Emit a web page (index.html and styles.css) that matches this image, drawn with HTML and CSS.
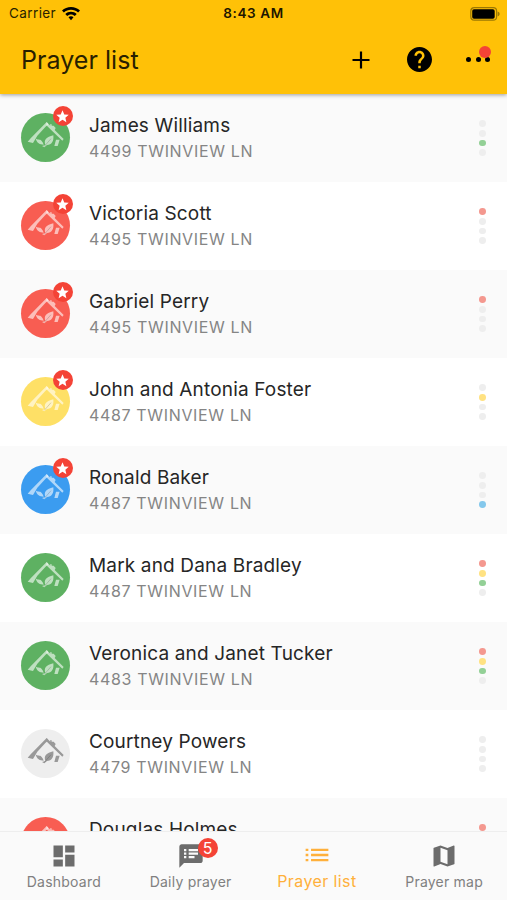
FILE: index.html
```html
<!DOCTYPE html>
<html lang="en">
<head>
<meta charset="utf-8">
<title>Prayer list</title>
<link rel="stylesheet" href="styles.css">
</head>
<body>
<svg class="defs" aria-hidden="true">
  <symbol id="house" viewBox="0 0 147 147">
    <path d="M77 27 L82 34 L73 42 L49 68 L36 90 L20 86 L29 76 Z"/>
    <path d="M77 27 L88 38 L87 34 L92 34 L92 38 L98 38 L104 45 L101 51 L128 78 L124 83 L96 56 L76 37 Z"/>
    <path d="M44 76 C49 83 57 77 62 84 C65 88 67 91 68 95 C57 95 47 91 44 76Z"/>
    <path d="M73 96 C68 79 76 73 97 67 C99 86 92 95 78 96 L70 103 L63 99 Z"/>
    <path d="M105 80 L116 80 L110 99 L100 99 Z"/>
    <path class="vein" d="M70 100 L90 77"/>
  </symbol>
  <symbol id="star" viewBox="0 0 24 24">
    <path d="M12 17.3 18.2 21l-1.64-7.03L22 9.24l-7.19-.61L12 2 9.19 8.63 2 9.24l5.46 4.73L5.82 21z"/>
  </symbol>
</svg>
<div class="screen">
  <header class="top">
    <div class="status">
      <div class="carrier"><span>Carrier</span>
        <svg class="wifi" viewBox="0 0 18 14"><path d="M9 0C5.500 0 2.400 1.300 0 3.600L1.900 5.600C3.800 3.800 6.300 2.800 9 2.800s5.200 1 7.100 2.800L18 3.600C15.600 1.300 12.500 0 9 0ZM9 4.700c-2.200 0-4.200.8-5.700 2.300L5.200 9C6.200 8 7.500 7.400 9 7.400S11.800 8 12.800 9l1.900-2C13.200 5.500 11.200 4.700 9 4.700ZM9 9.200c-1 0-1.800.4-2.500 1L9 13.200l2.500-3C10.800 9.600 10 9.200 9 9.200Z"/></svg>
      </div>
      <div class="time">8:43 AM</div>
      <svg class="battery" viewBox="0 0 30 14"><rect class="shell" x=".8" y=".7" width="25.800" height="12.500" rx="3.500"/><rect x="2.200" y="2.200" width="22.500" height="9.500" rx="1.800"/><path class="tip" d="M27.600 4.600c1.500.5 2 1.300 2 2.300s-.5 1.900-2 2.300Z"/></svg>
    </div>
    <div class="bar">
      <h1>Prayer list</h1>
      <svg class="plus" viewBox="0 0 18 18"><path d="M9 .5V17.500M.5 9H17.500"/></svg>
      <svg class="help" viewBox="2 2 20 20"><path d="M12 2C6.480 2 2 6.480 2 12s4.480 10 10 10 10-4.480 10-10S17.520 2 12 2zm1 17h-2v-2h2v2zm2.070-7.750l-.9.920C13.450 12.900 13 13.500 13 15h-2v-.5c0-1.100.45-2.100 1.170-2.830l1.240-1.260c.37-.36.590-.86.590-1.410 0-1.100-.9-2-2-2s-2 .9-2 2H8c0-2.210 1.790-4 4-4s4 1.790 4 4c0 .88-.36 1.680-.93 2.250z"/></svg>
      <div class="more"><i></i><i></i><i></i><b></b></div>
    </div>
  </header>
  <main class="list">
    <div class="row"><div class="avatar green"><svg><use href="#house"/></svg><span class="badge"><svg><use href="#star"/></svg></span></div><div class="text"><h2>James Williams</h2><p>4499 TWINVIEW LN</p></div><div class="dots"><i></i><i></i><i class="g"></i><i></i></div></div>
    <div class="row"><div class="avatar red"><svg><use href="#house"/></svg><span class="badge"><svg><use href="#star"/></svg></span></div><div class="text"><h2>Victoria Scott</h2><p>4495 TWINVIEW LN</p></div><div class="dots"><i class="r"></i><i></i><i></i><i></i></div></div>
    <div class="row"><div class="avatar red"><svg><use href="#house"/></svg><span class="badge"><svg><use href="#star"/></svg></span></div><div class="text"><h2>Gabriel Perry</h2><p>4495 TWINVIEW LN</p></div><div class="dots"><i class="r"></i><i></i><i></i><i></i></div></div>
    <div class="row"><div class="avatar yellow"><svg><use href="#house"/></svg><span class="badge"><svg><use href="#star"/></svg></span></div><div class="text"><h2>John and Antonia Foster</h2><p>4487 TWINVIEW LN</p></div><div class="dots"><i></i><i class="y"></i><i></i><i></i></div></div>
    <div class="row"><div class="avatar blue"><svg><use href="#house"/></svg><span class="badge"><svg><use href="#star"/></svg></span></div><div class="text"><h2>Ronald Baker</h2><p>4487 TWINVIEW LN</p></div><div class="dots"><i></i><i></i><i></i><i class="b"></i></div></div>
    <div class="row"><div class="avatar green"><svg><use href="#house"/></svg></div><div class="text"><h2>Mark and Dana Bradley</h2><p>4487 TWINVIEW LN</p></div><div class="dots"><i class="r"></i><i class="y"></i><i class="g"></i><i></i></div></div>
    <div class="row"><div class="avatar green"><svg><use href="#house"/></svg></div><div class="text"><h2>Veronica and Janet Tucker</h2><p>4483 TWINVIEW LN</p></div><div class="dots"><i class="r"></i><i class="y"></i><i class="g"></i><i></i></div></div>
    <div class="row"><div class="avatar gray"><svg><use href="#house"/></svg></div><div class="text"><h2>Courtney Powers</h2><p>4479 TWINVIEW LN</p></div><div class="dots"><i></i><i></i><i></i><i></i></div></div>
    <div class="row"><div class="avatar red"><svg><use href="#house"/></svg></div><div class="text"><h2>Douglas Holmes</h2></div><div class="dots"><i class="r"></i><i></i><i></i><i></i></div></div>
  </main>
  <nav class="tabs">
    <div class="tab"><svg viewBox="0 0 24 24"><path d="M3 13h8V3H3v10zm0 8h8v-6H3v6zm10 0h8V11h-8v10zm0-18v6h8V3h-8z"/></svg><span>Dashboard</span></div>
    <div class="tab"><div class="icon"><svg viewBox="0 0 24 24"><path d="M20 2H4c-1.100 0-1.990.9-1.990 2L2 22l4-4h14c1.100 0 2-.9 2-2V4c0-1.100-.9-2-2-2zM8 14H6v-2h2v2zm0-3H6V9h2v2zm0-3H6V6h2v2zm7 6h-5v-2h5v2zm3-3h-8V9h8v2zm0-3h-8V6h8v2z"/></svg><span class="count">5</span></div><span>Daily prayer</span></div>
    <div class="tab active"><svg viewBox="0 0 24 24"><path d="M1.500 6.200H4v2.200H1.500zM1.500 10.900H4v2.200H1.500zM1.500 15.600H4v2.200H1.500zM6.500 6.200h16v2.200h-16zM6.500 10.900h16v2.200h-16zM6.500 15.600h16v2.200h-16z"/></svg><span>Prayer list</span></div>
    <div class="tab"><svg viewBox="0 0 24 24"><path d="M20.500 3l-.16.030L15 5.100 9 3 3.360 4.900c-.21.070-.36.250-.36.480V20.500c0 .28.220.5.500.5l.16-.03L9 18.900l6 2.100 5.640-1.900c.21-.07.360-.25.360-.48V3.500c0-.28-.22-.5-.5-.5zM15 19l-6-2.110V5l6 2.110V19z"/></svg><span>Prayer map</span></div>
  </nav>
</div>
</body>
</html>
```

FILE: styles.css
```css
* { box-sizing: border-box; margin: 0; padding: 0; }
body { font-family: Inter, "Liberation Sans", sans-serif; background: #fafafa; }
svg { display: block; }
.defs { width: 0; height: 0; position: absolute; }
.screen { width: 507px; height: 900px; display: flex; flex-direction: column; overflow: hidden; }

.top { position: relative; z-index: 1; flex: none; height: 94px; background: #ffc107; box-shadow: 0 1px 4px rgba(0, 0, 0, .38); color: #291f00; }
.status { height: 27px; display: grid; grid-template-columns: 1fr auto 1fr; align-items: center; padding: 0 7px 0 9px; font-size: 13.500px; line-height: 27px; }
.carrier { display: flex; align-items: center; gap: 6px; letter-spacing: .4px; }
.wifi { width: 18px; height: 14px; fill: #000; }
.time { font-weight: 600; letter-spacing: .6px; margin-left: -2px; color: #1d1600; }
.battery { width: 30px; height: 14px; justify-self: end; }
.shell { fill: none; stroke: #9c7804; stroke-width: 1.200; }
.tip { fill: #9c7804; }
.bar { height: 65px; display: flex; align-items: center; padding: 0 17px 0 21px; }
.bar h1 { flex: 1; font-size: 25px; font-weight: 400; line-height: 30px; letter-spacing: .05px; }
.plus { width: 18px; height: 18px; fill: none; stroke: #000; stroke-width: 2.200; }
.help { width: 25px; height: 25px; margin: 0 34px 0 37px; fill: #000; }
.more { position: relative; width: 24px; display: flex; justify-content: space-between; }
.more i { width: 5px; height: 5px; border-radius: 50%; background: #000; }
.more b { position: absolute; left: 13px; top: -11px; width: 12px; height: 12px; border-radius: 50%; background: #f44336; }

.list { flex: 1; min-height: 0; overflow: hidden; background: #fff; }
.row { height: 88px; display: flex; align-items: flex-start; padding: 19px 21px 0 20.500px; background: #fff; }
.row:nth-child(odd) { background: #fafafa; }
.avatar { position: relative; flex: none; width: 49px; height: 49px; border-radius: 50%; color: rgba(255, 255, 255, .6); }
.avatar > svg { width: 49px; height: 49px; fill: currentColor; }
.vein { fill: none; stroke: rgba(0, 0, 0, .16); stroke-width: 3; }
.green { background: #5eb162; }
.red { background: #f85d52; }
.yellow { background: #fee066; }
.blue { background: #3b9cf0; }
.gray { background: #eee; color: #999; }
.badge { position: absolute; left: 32px; top: -7px; width: 20px; height: 20px; border-radius: 50%; background: #f44336; display: grid; place-items: center; }
.badge svg { width: 15px; height: 15px; fill: #fff; }
.text { flex: 1; margin-left: 19.500px; }
.text h2 { font-size: 19px; line-height: 25px; font-weight: 400; letter-spacing: .16px; color: #262626; }
.text p { font-size: 16px; line-height: 25px; margin-top: 1px; letter-spacing: .65px; color: #858585; }
.dots { display: flex; flex-direction: column; gap: 3px; margin-top: 7px; }
.dots i { width: 6.800px; height: 6.800px; border-radius: 50%; background: #eee; }
.dots .r { background: #f4988f; }
.dots .y { background: #ffe282; }
.dots .g { background: #93d096; }
.dots .b { background: #84c8ec; }

.tabs { flex: none; height: 69px; display: grid; grid-template-columns: repeat(4, 1fr); background: #fafafa; border-top: 1px solid #eee; }
.tab { display: flex; flex-direction: column; align-items: center; padding: 10px 0 0 1px; color: #757575; fill: #6c6c6c; }
.tab svg { width: 28px; height: 28px; }
.tab > span { font-size: 14px; line-height: 20px; margin-top: 2px; letter-spacing: .22px; color: #808080; white-space: nowrap; }
.icon { position: relative; }
.count { position: absolute; left: 21px; top: -4px; width: 20px; height: 20px; border-radius: 50%; background: #f44336; color: #fff; font-size: 16px; line-height: 20px; text-align: center; }
.tab.active { padding: 9px 0 0; fill: #ffb03b; }
.tab.active svg { width: 26px; }
.tab.active > span { color: #ffb03b; font-size: 16px; letter-spacing: .4px; }
```
